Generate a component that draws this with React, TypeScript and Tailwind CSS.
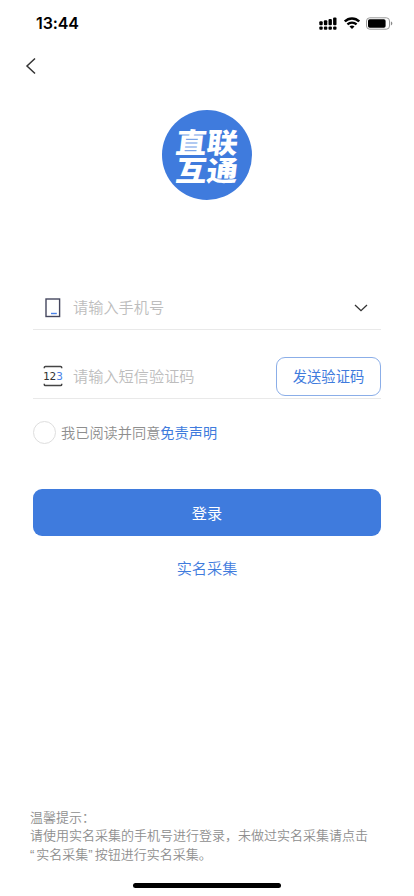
const StatusBar = () => (
  <header className="flex h-[46px] items-center justify-between pl-9 pr-[21px]">
    <span className="font-['Inter'] text-[16px] font-semibold leading-none tracking-[-0.1px] text-black">
      13:44
    </span>
    <div className="flex items-center">
      <svg viewBox="0 0 18 13" className="mr-[7px] h-[13px] w-[18px]" fill="#000">
        <rect x="0.3" y="4.2" width="3.4" height="4" rx="1" />
        <rect x="4.9" y="3.2" width="3.4" height="5" rx="1" />
        <rect x="9.5" y="2" width="3.4" height="6.2" rx="1" />
        <rect x="14.1" y="0.4" width="3.4" height="7.8" rx="1" />
        <rect x="0.3" y="9.6" width="3.4" height="3.2" rx="1" />
        <rect x="4.9" y="9.6" width="3.4" height="3.2" rx="1" />
        <rect x="9.5" y="9.6" width="3.4" height="3.2" rx="1" />
        <rect x="14.1" y="9.6" width="3.4" height="3.2" rx="1" />
      </svg>
      <svg viewBox="0 0 16 12" className="mr-[6px] h-3 w-4" fill="none" stroke="#000">
        <path d="M0.8 4.5C4.8 0.4 11.2 0.4 15.2 4.5" strokeWidth="2.4" />
        <path d="M3.4 7.4C6 4.9 10 4.9 12.6 7.4" strokeWidth="2.2" />
        <path d="M8 12L5.5 9.5C6.9 8.2 9.1 8.2 10.5 9.5Z" fill="#000" stroke="none" />
      </svg>
      <svg viewBox="0 0 27 13" className="h-[13px] w-[27px]">
        <rect x="0.5" y="0.8" width="23" height="11.4" rx="3.2" fill="none" stroke="#999" />
        <rect x="2" y="2.3" width="17.6" height="8.4" rx="1.7" fill="#000" />
        <path d="M24.9 4.6V8.4C25.9 8 26.3 7.3 26.3 6.5S25.9 5 24.9 4.6Z" fill="#888" />
      </svg>
    </div>
  </header>
);

const Logo = () => (
  <div className="mx-auto flex h-[90px] w-[90px] flex-col items-center justify-center rounded-full bg-[#3f7bdd] pb-px font-['Noto_Sans_CJK_SC',sans-serif] text-[31px] font-black leading-[28px] text-white">
    <span className="-skew-x-6 scale-y-[0.9]">直联</span>
    <span className="-skew-x-6 scale-y-[0.9]">互通</span>
  </div>
);

const PhoneIcon = () => (
  <svg viewBox="0 0 20 22" className="h-[22px] w-5" fill="none">
    <rect x="3" y="2" width="13.6" height="17.5" stroke="#45475e" strokeWidth="1.4" />
    <path d="M8 16.5H13.8" stroke="#4a82e8" strokeWidth="1.4" />
  </svg>
);

const CodeIcon = () => (
  <svg viewBox="0 0 20 22" className="h-[22px] w-5" fill="none">
    <path
      d="M1.3 3.2V2.6Q1.3 1.5 2.4 1.5H17.6Q18.7 1.5 18.7 2.6V3.2M1.3 18.8V19.4Q1.3 20.5 2.4 20.5H17.6Q18.7 20.5 18.7 19.4V18.8"
      stroke="#444"
      strokeWidth="1.5"
    />
    <text x="0" y="15.2" fontFamily="DejaVu Sans Mono" fontSize="11" fill="#333">
      12<tspan fill="#4a82e8">3</tspan>
    </text>
  </svg>
);

const App = () => {
  return (
    <div className="flex h-[896px] w-[414px] flex-col overflow-hidden bg-white font-['Noto_Sans_CJK_SC',sans-serif]">
      <StatusBar />

      <nav className="flex h-10 items-center pl-6">
        <button type="button" aria-label="返回">
          <svg viewBox="0 0 14 18" className="h-[18px] w-3.5" fill="none">
            <path d="M11 1.5L3 9L11 16.5" stroke="#333" strokeWidth="1.5" />
          </svg>
        </button>
      </nav>

      <div className="mt-6">
        <Logo />
      </div>

      <main className="mx-[33px] mt-[86px] flex flex-col">
        <label className="flex h-11 items-center border-b border-[#e9e9e9] pl-[10px] pr-[13px]">
          <PhoneIcon />
          <input
            type="tel"
            placeholder="请输入手机号"
            className="ml-[10px] min-w-0 flex-1 pb-0.5 text-[15.2px] font-[350] outline-none placeholder:text-[#bdbdbd]"
          />
          <svg viewBox="0 0 14 8" className="h-2 w-3.5" fill="none">
            <path d="M1 1L7 6.7L13 1" stroke="#333" strokeWidth="1.3" />
          </svg>
        </label>

        <div className="mt-[26px] flex h-[43px] items-center border-b border-[#e9e9e9] pb-0.5 pl-[10px]">
          <CodeIcon />
          <input
            type="text"
            placeholder="请输入短信验证码"
            className="ml-[10px] min-w-0 flex-1 pb-px text-[15.2px] font-[350] outline-none placeholder:text-[#bdbdbd]"
          />
          <button
            type="button"
            className="h-[39px] w-[105px] rounded-[9px] border border-[#8baee8] pb-px text-[14.3px] text-[#3f7bdd]"
          >
            发送验证码
          </button>
        </div>

        <div className="mt-[22px] flex h-[23px] items-center text-[14.2px] leading-5">
          <span className="mr-[5px] h-[23px] w-[23px] rounded-full border border-[#dedede]" />
          <span className="pb-0.5 font-[350] text-[#8e8e8e]">我已阅读并同意</span>
          <a className="pb-0.5 text-[#3f7bdd]">免责声明</a>
        </div>

        <button
          type="button"
          className="mt-[45px] h-[47px] rounded-[9px] bg-[#3f7bdd] pb-px text-[15.2px] text-white"
        >
          登录
        </button>
        <a className="mt-[19px] text-center text-[15.2px] font-[350] leading-6 text-[#3f7bdd]">
          实名采集
        </a>
      </main>

      <footer className="mt-auto">
        <p className="ml-[30px] whitespace-nowrap text-[13px] font-[350] leading-[18.3px] text-[#8e8e8e]">
          温馨提示：
          <br />
          请使用实名采集的手机号进行登录，未做过实名采集请点击
          <br />
          <span className="font-['Liberation_Sans'] tracking-[2px]">“</span>
          实名采集
          <span className="font-['Liberation_Sans'] tracking-[2px]">”</span>
          按钮进行实名采集。
        </p>
        <div className="mx-auto mb-2 mt-[19px] h-[5px] w-[148px] rounded-full bg-black" />
      </footer>
    </div>
  );
};

export default App;
